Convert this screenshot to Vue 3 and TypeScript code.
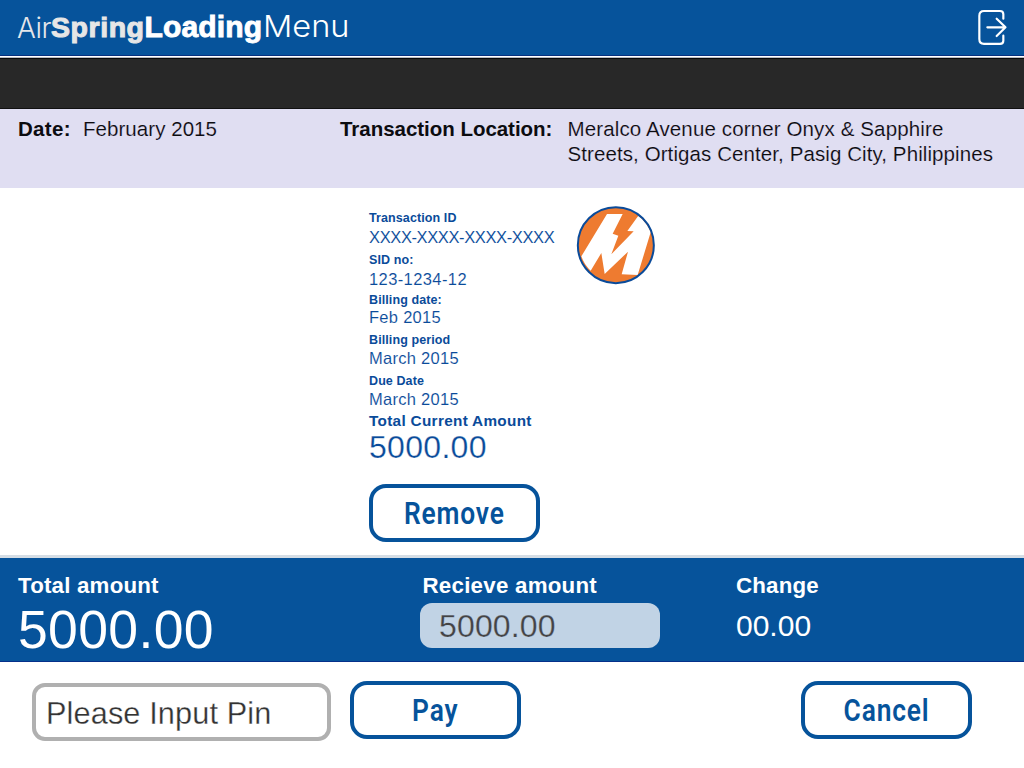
<script setup lang="ts">
import { ref } from 'vue'

interface Detail {
  label: string
  value: string
  kind: string
}

const details: Detail[] = [
  { label: 'Transaction ID', value: 'XXXX-XXXX-XXXX-XXXX', kind: 'code' },
  { label: 'SID no:', value: '123-1234-12', kind: 'number' },
  { label: 'Billing date:', value: 'Feb 2015', kind: 'date' },
  { label: 'Billing period', value: 'March 2015', kind: 'date' },
  { label: 'Due Date', value: 'March 2015', kind: 'date' },
]

const received = ref('5000.00')
const pin = ref('')
</script>

<template>
  <div class="screen">
    <header class="top">
      <h1 class="brand">
        <span class="air">Air</span><span class="spring">Spring</span><span class="loading">Loading</span><span class="menu">Menu</span>
      </h1>
      <svg class="exit" viewBox="0 0 192 192" aria-label="Exit">
        <path d="M130 56V43Q130 33 120 33H72Q58 33 58 47V117Q58 131.500 72 131.500H120Q130 131.500 130 122V107" />
        <path d="M82 82H135M110 56L136.500 82L110 108" />
      </svg>
    </header>
    <div class="strip"></div>

    <section class="info">
      <div class="info-date"><b>Date:</b><span>February 2015</span></div>
      <b class="info-label">Transaction Location:</b>
      <p class="info-place">Meralco Avenue corner Onyx &amp; Sapphire<br /><span>Streets, Ortigas Center, Pasig City, Philippines</span></p>
    </section>

    <main class="bill">
      <div class="details">
        <template v-for="d in details" :key="d.label">
          <span class="label">{{ d.label }}</span>
          <span class="value" :class="d.kind">{{ d.value }}</span>
        </template>
        <span class="label current">Total Current Amount</span>
        <span class="amount">5000.00</span>
        <button class="btn"><span>Remove</span></button>
      </div>
      <svg class="logo" viewBox="33 30 240 240">
        <circle cx="152.500" cy="150.500" r="114" fill="#ee7b30" />
        <path
          fill="#fff"
          d="M126 57H173L143 116L160 122L139 178L206 109L187 108L220 62Q246 82 257 112L218 240L170 238L189 170L119 237L109 174L77 227Q58 210 49 184Z"
        />
        <circle cx="152.500" cy="150.500" r="114" fill="none" stroke="#0a4b9a" stroke-width="6" />
      </svg>
    </main>

    <section class="totals">
      <div class="cell">
        <b class="total-label">Total amount</b>
        <span class="total">5000.00</span>
      </div>
      <div class="cell">
        <b class="receive-label">Recieve amount</b>
        <input v-model="received" class="received" />
      </div>
      <div class="cell">
        <b class="change-label">Change</b>
        <span class="change">00.00</span>
      </div>
    </section>

    <footer class="actions">
      <input v-model="pin" class="pin" placeholder="Please Input Pin" />
      <button class="btn"><span>Pay</span></button>
      <button class="btn cancel"><span>Cancel</span></button>
    </footer>
  </div>
</template>

<style>
body {
  margin: 0;
  background: #fff;
}
</style>

<style scoped>
.screen {
  width: 1024px;
  height: 768px;
  overflow: hidden;
  display: flex;
  flex-direction: column;
  background: #fff;
  font-family: 'Liberation Sans', Arial, sans-serif;
  white-space: nowrap;
}
.screen * {
  box-sizing: border-box;
}
.top {
  flex: none;
  height: 58px;
  display: flex;
  justify-content: space-between;
  background: linear-gradient(#06539b 55px, #06307f 55px 56px, #fff 56px 57px, #b9bcc4 57px);
}
.brand {
  margin: 0;
  padding-left: 17px;
  display: flex;
  font-weight: 400;
  color: #fff;
  line-height: 40px;
}
.brand span {
  display: block;
}
.air {
  width: 34px;
  padding-top: 8px;
  font: 300 28px/40px Inter, sans-serif;
  letter-spacing: -0.500px;
  color: #e4e6ea;
}
.spring {
  width: 93.500px;
  padding-top: 7px;
  font-size: 28.500px;
  font-weight: 700;
  letter-spacing: 0.550px;
  color: #e6e6e6;
  -webkit-text-stroke: 1px #e6e6e6;
}
.loading {
  width: 118px;
  padding-top: 7px;
  font-size: 30px;
  font-weight: 700;
  letter-spacing: 0.150px;
  -webkit-text-stroke: 0.900px #fff;
}
.menu {
  padding-top: 6px;
  font: 300 30px/40px Inter, sans-serif;
  transform: scaleX(1.085);
  transform-origin: 0 50%;
}
.exit {
  width: 64px;
  height: 64px;
  margin-bottom: -6px;
  fill: none;
  stroke: #fff;
  stroke-width: 6.500;
  stroke-linecap: round;
  stroke-linejoin: round;
}
.strip {
  flex: none;
  height: 51px;
  background: #282828;
  border-top: 1px solid #0a0a0a;
  border-bottom: 1px solid #111;
}
.info {
  flex: none;
  height: 79px;
  padding: 8px 0 0 18px;
  display: grid;
  grid-template-columns: 322px 227.500px 1fr;
  background: #e0def2;
  color: #0c0c10;
  font-size: 20.500px;
  line-height: 24.500px;
}
.info-date b {
  display: inline-block;
  width: 65px;
  letter-spacing: 0.300px;
}
.info-date span {
  letter-spacing: 0.050px;
}
.info-label {
  letter-spacing: -0.030px;
}
.info-place {
  margin: 0;
  letter-spacing: 0.130px;
}
.info-place span {
  letter-spacing: 0.090px;
}
.info-date span,
.info-place {
  -webkit-text-stroke: 0.150px #e0def2;
}
.bill {
  flex: none;
  height: 367px;
  padding: 22px 0 0 369px;
  display: flex;
  align-items: flex-start;
  color: #0a4b9a;
}
.details {
  width: 207px;
  display: grid;
  justify-items: start;
  grid-template-rows: 17px 25px 18px 22px 15.500px 24.500px 17px 24px 16.500px 23.500px 17px 54px auto;
}
.label {
  font-size: 12.500px;
  font-weight: 700;
  line-height: 16px;
  letter-spacing: 0.100px;
}
.current {
  font-size: 15.300px;
  letter-spacing: 0.320px;
}
.value {
  font-size: 16.500px;
  line-height: 18.500px;
  -webkit-text-stroke: 0.100px #fff;
}
.code {
  line-height: 20px;
  letter-spacing: -0.380px;
}
.number {
  letter-spacing: 0.400px;
}
.date {
  letter-spacing: 0.280px;
}
.amount {
  font-size: 32px;
  line-height: 35px;
  letter-spacing: 0.300px;
  -webkit-text-stroke: 0.250px #fff;
}
.btn {
  width: 171px;
  height: 58px;
  padding: 2px 0 0 0;
  border: 4px solid #06539b;
  border-radius: 17px;
  background: #fff;
  color: #06539b;
  font: 600 31px/46px Roboto, sans-serif;
  letter-spacing: 1px;
}
.btn span {
  display: inline-block;
  transform: scaleX(0.850);
}
.logo {
  width: 80px;
  height: 80px;
  margin-top: -5px;
}
.totals {
  flex: none;
  height: 107px;
  padding: 17px 0 0 18px;
  display: grid;
  grid-template-columns: 402px 316px 1fr;
  align-items: start;
  border-top: 3px solid #d5dde5;
  border-bottom: 1px solid #05308a;
  background: #06539b;
  color: #fff;
}
.cell {
  display: flex;
  flex-direction: column;
  align-items: flex-start;
}
.cell b {
  font-size: 22.300px;
  line-height: 22px;
  height: 28px;
}
.total-label {
  letter-spacing: 0.200px;
}
.receive-label {
  padding-left: 2.500px;
  letter-spacing: 0.250px;
}
.change-label {
  letter-spacing: 0.200px;
}
.total {
  font-size: 53.500px;
  line-height: 54px;
  letter-spacing: 0.350px;
}
.received {
  width: 240px;
  height: 45px;
  padding: 1px 0 0 19px;
  border: 0;
  border-radius: 12px;
  background: #c1d3e5;
  color: #444;
  font: 32px 'Liberation Sans', Arial, sans-serif;
  letter-spacing: 0.150px;
  -webkit-text-stroke: 0.250px #c1d3e5;
}
.change {
  padding-top: 3px;
  font-size: 30px;
  line-height: 40px;
}
.actions {
  flex: 1;
  padding: 19px 52px 0 32px;
  display: flex;
  align-items: flex-start;
}
.pin {
  width: 299px;
  height: 58px;
  margin: 2px 19px 0 0;
  padding: 3px 0 0 10px;
  border: 4px solid #b0b0b0;
  border-radius: 13px;
  background: #fff;
  font: 30.700px 'Liberation Sans', Arial, sans-serif;
  letter-spacing: 0.120px;
  color: #333;
}
.pin::placeholder {
  color: #333;
  opacity: 1;
  -webkit-text-stroke: 0.300px #fff;
}
.cancel {
  margin-left: auto;
}
</style>
